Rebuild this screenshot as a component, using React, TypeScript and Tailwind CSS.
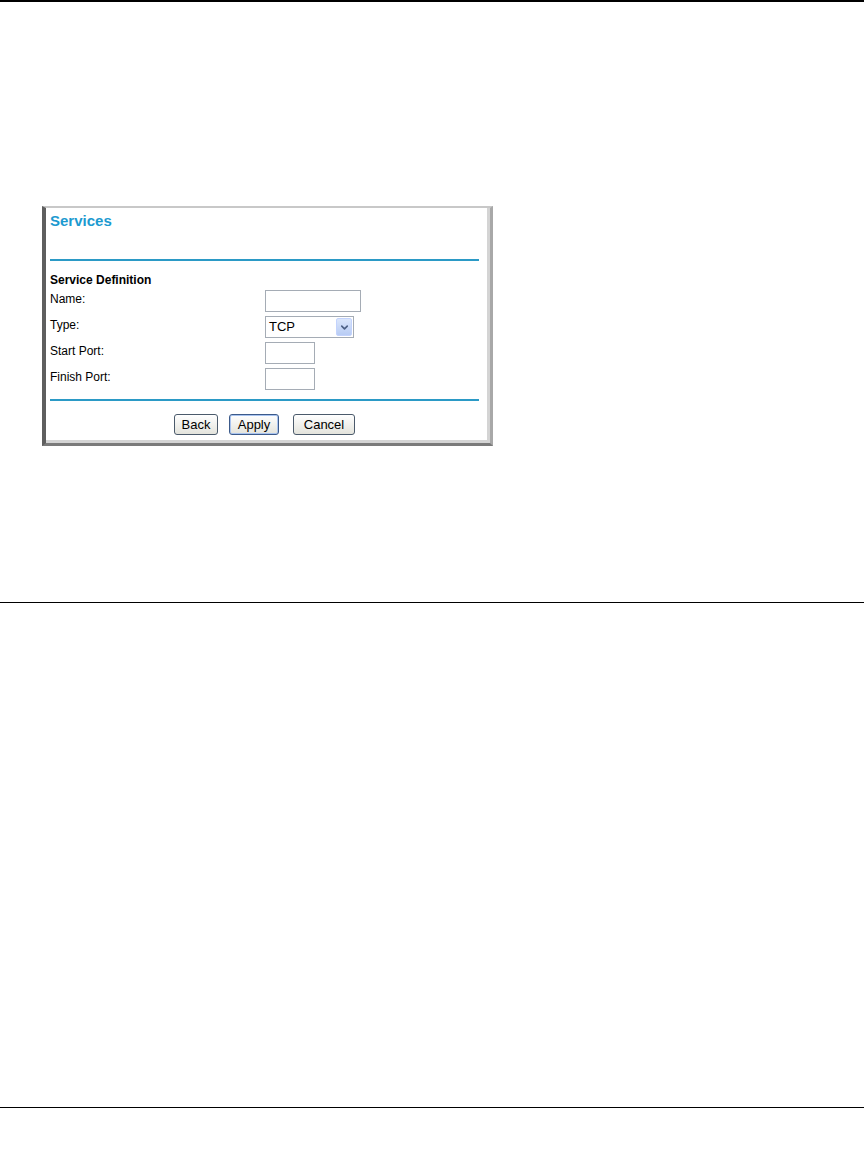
import { ChevronDown } from 'lucide-react';

const rows = [
  { label: 'Name:', kind: 'text', width: 'w-[96px]' },
  { label: 'Type:', kind: 'select', width: 'w-[89px]' },
  { label: 'Start Port:', kind: 'text', width: 'w-[50px]' },
  { label: 'Finish Port:', kind: 'text', width: 'w-[50px]' },
];

function Field({ kind, width }: { kind: string; width: string }) {
  if (kind === 'select') {
    return (
      <div className={`${width} h-[22px] flex items-center border border-[#a5acb5] bg-white`}>
        <span className="flex-1 pl-[3px] text-[13px] text-black">TCP</span>
        <span className="w-[16px] h-[18px] mr-[1px] flex items-center justify-center rounded-[2px] bg-gradient-to-b from-[#dbe6fb] to-[#b8ccf4] border border-[#c3d3fd]">
          <ChevronDown size={11} strokeWidth={3.5} className="text-[#4d6185]" />
        </span>
      </div>
    );
  }
  return <div className={`${width} h-[22px] border border-[#a5acb5] bg-white`} />;
}

function Btn({ label, width, primary }: { label: string; width: string; primary?: boolean }) {
  return (
    <button
      className={`${width} h-[21px] rounded-[3px] border text-[13px] text-black leading-none bg-gradient-to-b from-[#ffffff] to-[#e3e3dc] ${
        primary ? 'border-[#3c5a8a] shadow-[inset_0_0_0_1px_#a9c4f0]' : 'border-[#4b5a6b]'
      }`}
    >
      {label}
    </button>
  );
}

export default function App() {
  return (
    <div className="w-[864px] h-[1170px] bg-white font-['Liberation_Sans',Arial,sans-serif] flex flex-col">
      <div className="h-[2px] bg-black" />

      <div className="ml-[42px] mt-[204px] w-[451px] h-[240px] flex flex-col bg-white border-l-[4px] border-l-[#5f5f5f] border-t-[2px] border-t-[#c8c8c8] border-r-[3px] border-r-[#a8a8a8] border-b-[3px] border-b-[#7a7a7a] shadow-[inset_-3px_-3px_0_#d4d4d4]">
        <div className="pl-[4px] pr-[11px] flex flex-col">
          <h1 className="pt-[4px] text-[15px] font-bold text-[#1c9ad0] leading-[18px]">Services</h1>
          <div className="mt-[29px] h-[2px] bg-[#2b9ac6]" />

          <div className="mt-[12px] text-[12px] font-bold text-black leading-[14px]">Service Definition</div>
          <div className="mt-[3px] flex flex-col gap-[4px]">
            {rows.map((r) => (
              <div key={r.label} className="flex items-center">
                <span className="w-[215px] text-[12px] text-black leading-[14px] -mt-[4px]">{r.label}</span>
                <Field kind={r.kind} width={r.width} />
              </div>
            ))}
          </div>

          <div className="mt-[9px] h-[2px] bg-[#2b9ac6]" />

          <div className="mt-[13px] flex justify-center items-center">
            <Btn label="Back" width="w-[44px]" />
            <div className="w-[11px]" />
            <Btn label="Apply" width="w-[50px]" primary />
            <div className="w-[14px]" />
            <Btn label="Cancel" width="w-[62px]" />
          </div>
        </div>
      </div>

      <div className="mt-[156px] h-px bg-black" />
      <div className="mt-[504px] h-px bg-black" />
    </div>
  );
}
